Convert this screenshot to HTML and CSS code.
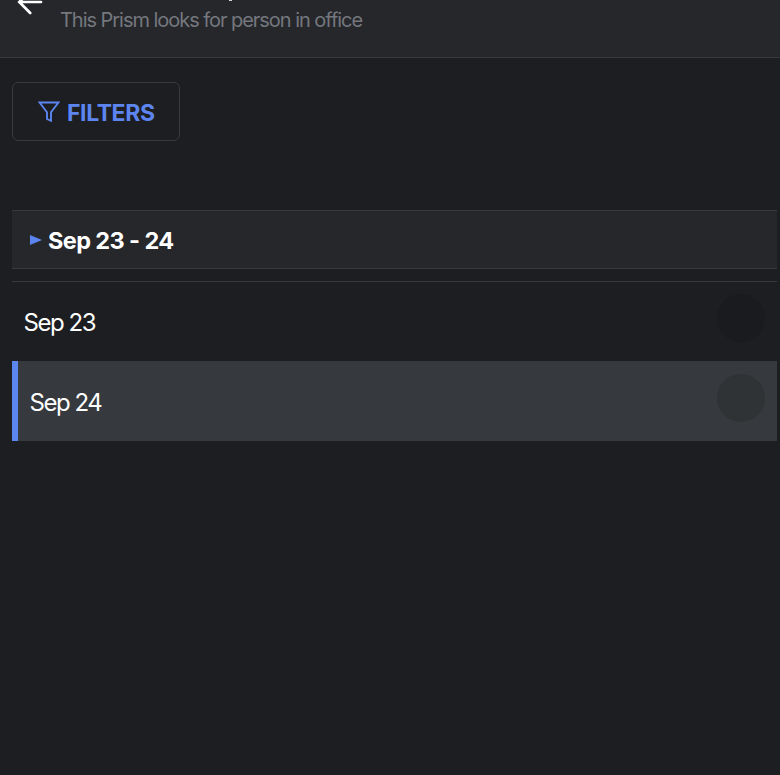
FILE: index.html
```html
<!DOCTYPE html>
<html lang="en">
<head>
<meta charset="utf-8">
<title>Prism</title>
<link rel="stylesheet" href="styles.css">
</head>
<body>
<header class="header">
  <svg class="back" width="26" height="28" viewBox="0 0 26 28"><path d="M24 14H2.8M13.2 3L2.3 14l10.9 11" fill="none" stroke="#fff" stroke-width="2.7" stroke-linecap="round"/></svg>
  <p class="subtitle">This Prism looks for person in office</p>
  <i class="descender"></i>
</header>
<main class="content">
  <button class="filters">
    <svg width="22" height="22" viewBox="0 0 22 22"><path d="M1.5 1.5H20.5L13 11.2V19.8L9 18V11.2Z" fill="none" stroke="#5c85f0" stroke-width="1.9" stroke-linejoin="miter"/></svg>
    <span class="filters-label">FILTERS</span>
  </button>
  <section class="group">
    <svg width="12" height="10" viewBox="0 0 12 10"><path d="M0 0L12 5L0 10Z" fill="#5c85f0"/></svg>
    <h2 class="group-title">Sep 23 - 24</h2>
  </section>
  <ul class="days">
    <li class="day"><span class="day-name">Sep 23</span><i class="dot"></i></li>
    <li class="day selected"><span class="day-name">Sep 24</span><i class="dot"></i></li>
  </ul>
</main>
</body>
</html>
```

FILE: styles.css
```css
* { box-sizing: border-box; }
body {
  margin: 0;
  height: 775px;
  overflow: hidden;
  background: #1d1e21;
  color: #fff;
  font-family: Inter, "Liberation Sans", sans-serif;
}
.header {
  position: relative;
  height: 58px;
  overflow: hidden;
  padding: 7px 0 0 60px;
  background: #26272b;
  border-bottom: 1px solid #38393d;
}
.back { position: absolute; left: 17px; top: -12px; }
.descender { position: absolute; left: 229px; top: 0; width: 3px; height: 1px; background: #d5d5d6; }
.subtitle {
  margin: 0;
  font-size: 20px;
  line-height: 26px;
  letter-spacing: -1.04px;
  color: #74777e;
  white-space: nowrap;
}
.content { padding: 24px 3px 0 12px; }
.filters {
  display: flex;
  align-items: center;
  gap: 7px;
  width: 168px;
  height: 59px;
  padding: 0 0 0 25px;
  border: 1px solid #38393e;
  border-radius: 6px;
  background: transparent;
  color: #5c85f0;
  font-family: inherit;
}
.filters-label {
  padding-top: 2px;
  font-size: 23px;
  font-weight: 700;
  line-height: 28px;
  letter-spacing: -0.4px;
}
.group {
  display: flex;
  align-items: center;
  gap: 6px;
  height: 59px;
  margin-top: 69px;
  padding-left: 18px;
  background: #26272b;
  border-top: 1px solid #38393e;
  border-bottom: 1px solid #38393e;
}
.group-title {
  margin: 0;
  padding-top: 3px;
  font-size: 23.5px;
  font-weight: 650;
  line-height: 28px;
  letter-spacing: -0.6px;
}
.days {
  margin: 12px 0 0;
  padding: 0;
  list-style: none;
  border-top: 1px solid #38393e;
}
.day {
  display: flex;
  align-items: flex-start;
  justify-content: space-between;
  height: 79px;
  padding: 12px 12px 0;
}
.selected {
  height: 80px;
  padding-top: 13px;
  background: #36393d;
  border-left: 6px solid #5c85f0;
}
.day-name {
  padding-top: 14px;
  margin-left: -0.5px;
  font-size: 24px;
  line-height: 30px;
  letter-spacing: -1.45px;
}
.dot { width: 48px; height: 48px; border-radius: 50%; background: #1a1b1e; }
.selected .dot { background: #2f3336; }
```
